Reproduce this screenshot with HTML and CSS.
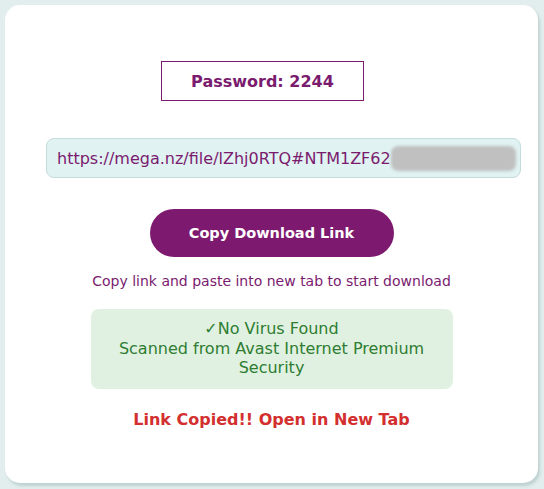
FILE: index.html
```html
<!DOCTYPE html>
<html>
<head>
<meta charset="utf-8">
<link rel="stylesheet" href="styles.css">
</head>
<body>
<div class="card">
  <div class="password">Password: 2244</div>
  <div class="url">
    <span class="url-text">https://mega.nz/file/lZhj0RTQ#NTM1ZF62</span>
    <span class="blur"></span>
  </div>
  <button class="copy-btn">Copy Download Link</button>
  <p class="caption">Copy link and paste into new tab to start download</p>
  <div class="scan">
    <div>✓No Virus Found</div>
    <div>Scanned from Avast Internet Premium Security</div>
  </div>
  <p class="copied">Link Copied!! Open in New Tab</p>
</div>
</body>
</html>
```
FILE: styles.css
```css
html, body {
  margin: 0;
  padding: 0;
}
body {
  background: #e2eeee;
  padding: 5px 6px 6px 5px;
  font-family: "DejaVu Sans", Verdana, sans-serif;
}
.card {
  background: #ffffff;
  border-radius: 15px;
  height: 478px;
  box-shadow: 2px 3px 3px rgba(150, 175, 175, 0.45);
  display: flex;
  flex-direction: column;
  align-items: center;
  padding-top: 56px;
  box-sizing: border-box;
}
.password {
  width: 203px;
  height: 40px;
  box-sizing: border-box;
  border: 1px solid #7a1b6e;
  color: #7a1b6e;
  font-weight: bold;
  font-size: 16px;
  display: flex;
  align-items: center;
  justify-content: center;
  margin-left: -18px;
}
.url {
  margin-top: 37px;
  margin-left: 24px;
  width: 475px;
  height: 40px;
  box-sizing: border-box;
  background: #e0f2f2;
  border: 1px solid #c6dcdc;
  border-radius: 8px;
  display: flex;
  align-items: center;
  padding-left: 10px;
  color: #7a1b6e;
  font-size: 16px;
  overflow: hidden;
  white-space: nowrap;
}
.blur {
  display: inline-block;
  flex: none;
  width: 125px;
  height: 25px;
  background: #c0c0c0;
  border-radius: 7px;
  filter: blur(1.5px);
}
.copy-btn {
  margin-top: 31px;
  width: 244px;
  height: 48px;
  border: none;
  border-radius: 24px;
  background: #7d1a6f;
  color: #ffffff;
  font-family: inherit;
  font-weight: bold;
  font-size: 14.5px;
}
.caption {
  margin: 16px 0 0;
  color: #7a1b6e;
  font-size: 14px;
}
.scan {
  margin-top: 20px;
  width: 362px;
  height: 80px;
  box-sizing: border-box;
  background: #e1f1e1;
  border-radius: 8px;
  color: #2e7d32;
  font-size: 16px;
  line-height: 19.5px;
  text-align: center;
  padding: 10px 16px 0;
}
.copied {
  margin: 21px 0 0;
  color: #d32f2f;
  font-weight: bold;
  font-size: 16px;
}
```
